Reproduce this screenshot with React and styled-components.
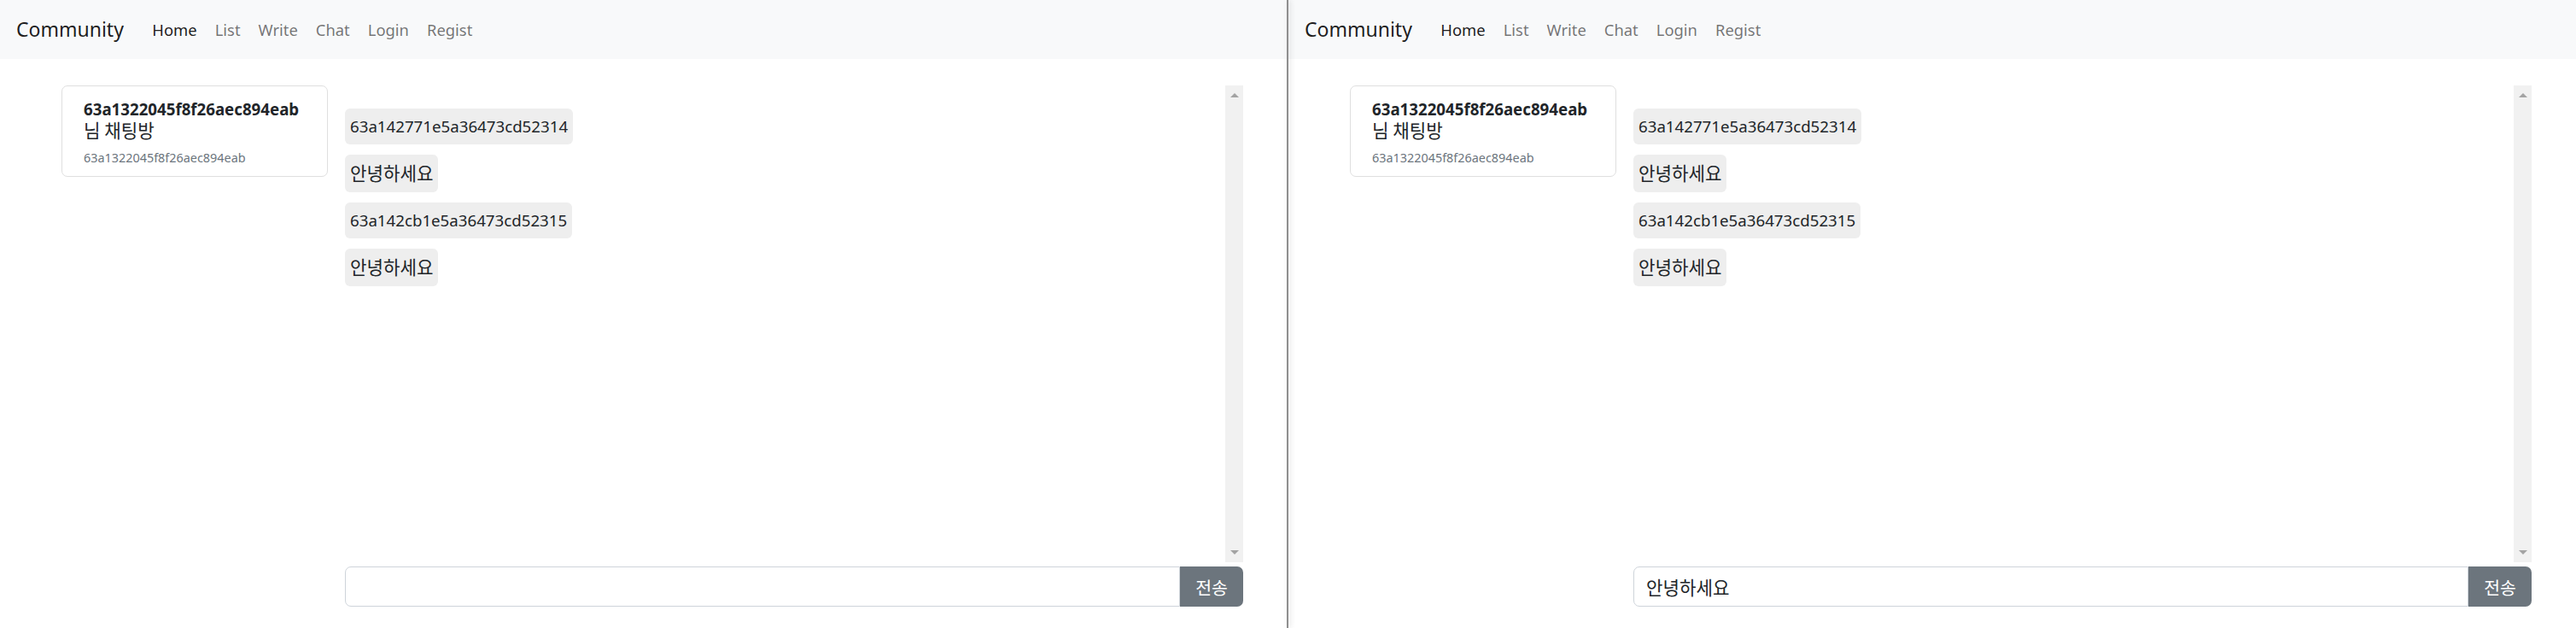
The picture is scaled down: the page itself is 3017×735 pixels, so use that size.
import styled, { createGlobalStyle } from 'styled-components';

const GlobalStyle = createGlobalStyle`
  html, body {
    margin: 0;
    padding: 0;
    background: #ffffff;
  }

  body {
    font-family: 'Noto Sans', 'Noto Sans CJK KR', sans-serif;
    color: #212529;
  }
`;

const Screen = styled.div`
  display: flex;
  width: 3017px;
  height: 735px;
  overflow: hidden;
`;

const Window = styled.div`
  width: ${(p) => p.width}px;
  flex-shrink: 0;
  display: flex;
  flex-direction: column;
  background: #ffffff;
`;

const Divider = styled.div`
  width: 2px;
  flex-shrink: 0;
  background: #8f8f8f;
  box-shadow: 2px 0 6px rgba(0, 0, 0, 0.18);
  z-index: 2;
`;

const NavBar = styled.nav`
  height: 69px;
  background: #f8f9fa;
  display: flex;
  align-items: center;
  padding-left: 19px;
  box-sizing: border-box;
`;

const Brand = styled.a`
  font-size: 23px;
  line-height: 37px;
  color: rgba(0, 0, 0, 0.9);
  margin-right: 23px;
  text-decoration: none;
`;

const NavLinks = styled.ul`
  display: flex;
  list-style: none;
  margin: 0;
  padding: 0;

  li {
    padding: 0 10.5px;
    font-size: 18.4px;
    line-height: 30px;
    color: rgba(0, 0, 0, 0.55);
  }

  li.active {
    color: rgba(0, 0, 0, 0.9);
  }
`;

const Ko = styled.span`
  font-family: 'Noto Sans CJK KR', sans-serif;
  font-size: 21.2px;
  font-weight: 400;
`;

const Main = styled.main`
  display: flex;
  gap: 20px;
  padding: 31px 0 0 72px;
`;

const RoomCard = styled.div`
  width: 312px;
  height: 107px;
  box-sizing: border-box;
  border: 1px solid #dfdfdf;
  border-radius: 7px;
  padding: 15px 25px 12px;

  h6 {
    margin: 0;
    font-size: 18.7px;
    line-height: 24px;
    font-weight: 400;
  }

  h6 b {
    font-weight: 700;
  }

  p {
    margin: 8px 0 0;
    font-size: 14.4px;
    line-height: 22px;
    color: #6c757d;
  }
`;

const ChatColumn = styled.section`
  width: 1052px;
  display: flex;
  flex-direction: column;
`;

const ChatBox = styled.div`
  height: 558px;
  display: flex;
`;

const MessageList = styled.div`
  flex: 1;
  display: flex;
  flex-direction: column;
  align-items: flex-start;
  gap: 12px;
  padding-top: 27px;
`;

const Bubble = styled.div`
  background: #eeeeee;
  border-radius: 6px;
  padding: 6px;
  font-size: 18.7px;
  line-height: 30px;
  color: #212529;
`;

const ScrollTrack = styled.div`
  width: 21px;
  background: #f1f1f1;
  display: flex;
  flex-direction: column;
  justify-content: space-between;
  align-items: center;
  padding: 9px 0;
  box-sizing: border-box;
`;

const Arrow = styled.span`
  width: 0;
  height: 0;
  border-left: 5px solid transparent;
  border-right: 5px solid transparent;
  ${(p) =>
    p.down
      ? 'border-top: 5px solid #a3a3a3;'
      : 'border-bottom: 5px solid #a3a3a3;'}
`;

const InputGroup = styled.form`
  display: flex;
  height: 47px;
  margin: 5px 0 0;
`;

const TextInput = styled.input`
  flex: 1;
  min-width: 0;
  box-sizing: border-box;
  border: 1px solid #ced4da;
  border-radius: 7px 0 0 7px;
  padding: 0 14px;
  font-family: 'Noto Sans CJK KR', sans-serif;
  font-size: 21.2px;
  color: #212529;
  background: #ffffff;
  outline: none;
`;

const SendButton = styled.button`
  width: 74px;
  border: none;
  border-radius: 0 7px 7px 0;
  background: #6c757d;
  color: #ffffff;
  font-family: 'Noto Sans CJK KR', sans-serif;
  font-size: 20.5px;
  cursor: pointer;
`;

const roomId = '63a1322045f8f26aec894eab';
const messages = [
  '63a142771e5a36473cd52314',
  '안녕하세요',
  '63a142cb1e5a36473cd52315',
  '안녕하세요',
];
const links = ['Home', 'List', 'Write', 'Chat', 'Login', 'Regist'];
const isKorean = (s) => /[가-힣]/.test(s);

const ChatPage = ({ width, draft }) => (
  <Window width={width}>
    <NavBar>
      <Brand>Community</Brand>
      <NavLinks>
        {links.map((l, i) => (
          <li key={l} className={i === 0 ? 'active' : ''}>
            {l}
          </li>
        ))}
      </NavLinks>
    </NavBar>
    <Main>
      <RoomCard>
        <h6>
          <b>{roomId}</b>
          <br />
          <Ko>님 채팅방</Ko>
        </h6>
        <p>{roomId}</p>
      </RoomCard>
      <ChatColumn>
        <ChatBox>
          <MessageList>
            {messages.map((m, i) => (
              <Bubble key={i}>{isKorean(m) ? <Ko>{m}</Ko> : m}</Bubble>
            ))}
          </MessageList>
          <ScrollTrack>
            <Arrow />
            <Arrow down />
          </ScrollTrack>
        </ChatBox>
        <InputGroup onSubmit={(e) => e.preventDefault()}>
          <TextInput defaultValue={draft} />
          <SendButton type='submit'>전송</SendButton>
        </InputGroup>
      </ChatColumn>
    </Main>
  </Window>
);

const App = () => (
  <>
    <GlobalStyle />
    <Screen>
      <ChatPage width={1507} draft='' />
      <Divider />
      <ChatPage width={1508} draft='안녕하세요' />
    </Screen>
  </>
);

export default App;
